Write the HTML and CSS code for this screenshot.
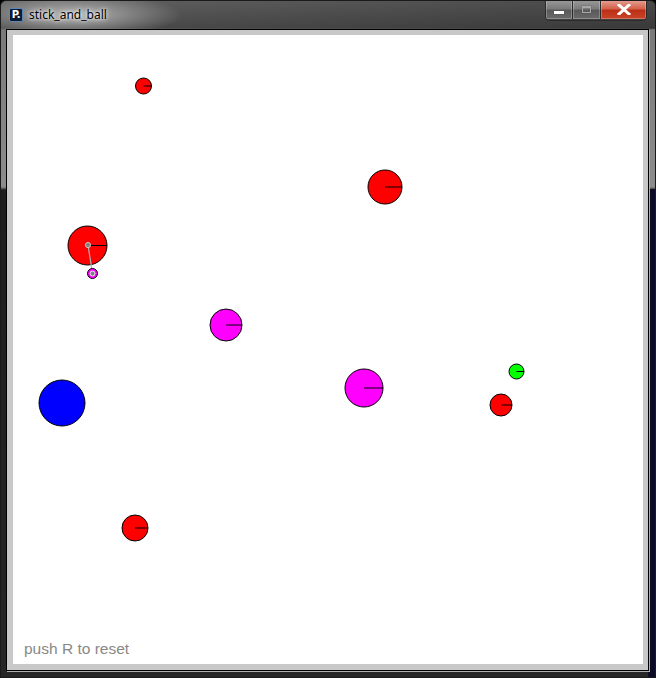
FILE: index.html
```html
<!DOCTYPE html>
<html>
<head>
<meta charset="utf-8">
<link rel="stylesheet" href="styles.css">
</head>
<body>
<div class="window">
  <div class="titlebar">
    <div class="app-icon"><span>P.</span></div>
    <div class="title">stick_and_ball</div>
    <div class="buttons">
      <div class="btn btn-min"><span class="min-glyph"></span></div>
      <div class="btn btn-max"><span class="max-glyph"></span></div>
      <div class="btn btn-close">
        <svg width="14" height="11" viewBox="0 0 14 11"><path d="M2 1 L12 10 M12 1 L2 10" stroke="#fff" stroke-width="3" stroke-linecap="square"/></svg>
      </div>
    </div>
  </div>
  <div class="client">
    <div class="canvas">
      <svg class="scene" width="630" height="629" viewBox="13 35 630 629">
        <g stroke="#000" stroke-width="1">
          <circle cx="143.5" cy="86" r="8" fill="#ff0000"/>
          <line x1="143.5" y1="86" x2="151.5" y2="86"/>
          <circle cx="385" cy="187" r="17" fill="#ff0000"/>
          <line x1="385" y1="187" x2="402" y2="187"/>
          <circle cx="87.5" cy="245.5" r="19.5" fill="#ff0000"/>
          <line x1="87.5" y1="245.5" x2="107" y2="245.5"/>
          <circle cx="226" cy="325" r="16" fill="#ff00ff"/>
          <line x1="226" y1="325" x2="242" y2="325"/>
          <circle cx="62" cy="403" r="23" fill="#0000ff"/>
          <circle cx="364" cy="388" r="19" fill="#ff00ff"/>
          <line x1="364" y1="388" x2="383" y2="388"/>
          <circle cx="516.5" cy="371.5" r="7.5" fill="#00ff00"/>
          <line x1="516.5" y1="371.5" x2="524" y2="371.5"/>
          <circle cx="501" cy="405" r="11" fill="#ff0000"/>
          <line x1="501" y1="405" x2="512" y2="405"/>
          <circle cx="135" cy="528" r="13" fill="#ff0000"/>
          <line x1="135" y1="528" x2="148" y2="528"/>
        </g>
        <line x1="88" y1="245" x2="92.5" y2="273.5" stroke="#b4b4b4" stroke-width="1.2"/>
        <circle cx="92.5" cy="273.5" r="5" fill="#ff00ff" stroke="#000" stroke-width="1"/>
        <circle cx="92.5" cy="273.5" r="2.5" fill="#808080" stroke="#fff" stroke-width="0.8"/>
        <circle cx="88" cy="245" r="2.6" fill="#808080" stroke="#dcdcdc" stroke-width="0.8"/>
      </svg>
      <div class="hint">push R to reset</div>
    </div>
  </div>
</div>
</body>
</html>
```

FILE: styles.css
```css
html, body {
  margin: 0;
  padding: 0;
  background: #000;
}

.window {
  width: 656px;
  height: 678px;
  box-sizing: border-box;
  border: 1px solid #1a1a1a;
  border-radius: 6px 6px 0 0;
  display: flex;
  flex-direction: column;
  background:
    linear-gradient(to bottom, transparent 0, transparent 188px, #0b0b26 188px, #0b0b26 100%) right top / 7px 100% no-repeat,
    linear-gradient(to bottom, #626262 0, #4c4c4c 27px, #7a7a7a 29px, #8c8c8c 186px, #1e1e1e 189px, #262626 100%);
  overflow: hidden;
}

.titlebar {
  height: 28px;
  flex: none;
  display: flex;
  align-items: flex-start;
  padding: 0 8px 0 8px;
  background:
    radial-gradient(ellipse 110px 22px at 72px 14px, rgba(205,205,205,0.8), rgba(205,205,205,0) 100%),
    linear-gradient(to right, rgba(0,0,0,0) 0, rgba(0,0,0,0.25) 100%);
}

.app-icon {
  width: 14px;
  height: 14px;
  margin-top: 7px;
  box-sizing: border-box;
  border: 1px solid #5a86b8;
  border-radius: 2px;
  background: #0c1b33;
  display: flex;
  align-items: center;
  justify-content: center;
  flex: none;
}

.app-icon span {
  color: #fff;
  font-family: "DejaVu Sans", sans-serif;
  font-size: 10px;
  font-weight: bold;
  line-height: 10px;
  letter-spacing: -0.5px;
}

.title {
  margin-left: 6px;
  margin-top: 6px;
  font-family: "Noto Sans", "DejaVu Sans", sans-serif;
  font-size: 12px;
  line-height: 16px;
  color: #000;
  text-shadow: 0 0 6px #fff, 0 0 3px #fff;
}

.buttons {
  margin-left: auto;
  margin-top: -1px;
  display: flex;
  height: 20px;
  border: 1px solid #2b2b2b;
  border-top: none;
  border-radius: 0 0 5px 5px;
  overflow: hidden;
}

.btn {
  height: 19px;
  box-sizing: border-box;
  display: flex;
  align-items: center;
  justify-content: center;
  box-shadow: inset 0 0 0 1px rgba(255,255,255,0.25);
}

.btn-min {
  width: 27px;
  background: linear-gradient(to bottom, #9a9a9a 0, #7c7c7c 45%, #5a5a5a 55%, #6a6a6a 100%);
  border-right: 1px solid #2b2b2b;
}

.btn-max {
  width: 28px;
  background: linear-gradient(to bottom, #9a9a9a 0, #7c7c7c 45%, #5a5a5a 55%, #6a6a6a 100%);
  border-right: 1px solid #2b2b2b;
}

.btn-close {
  width: 45px;
  background: linear-gradient(to bottom, #e7a294 0, #d3634d 45%, #bd2f17 55%, #c8452a 100%);
}

.min-glyph {
  width: 10px;
  height: 3px;
  margin-top: 5px;
  background: #fff;
  box-shadow: 0 0 1px #333;
}

.max-glyph {
  width: 9px;
  height: 7px;
  box-sizing: border-box;
  border: 1px solid #a8a8a8;
  border-top-width: 2px;
  box-shadow: 0 0 1px #444;
}

.client {
  flex: 1;
  margin: 0 6px 6px 5px;
  border: 1px solid #000;
  background: #c8c8c8;
  padding: 5px 5px 6px 6px;
  display: flex;
  box-shadow: 1px 1px 0 #b0b0b0;
}

.canvas {
  position: relative;
  flex: 1;
  background: #fff;
  display: flex;
  flex-direction: column;
  justify-content: flex-end;
  padding: 0 0 6px 11px;
}

.scene {
  position: absolute;
  left: 0;
  top: 0;
}

.hint {
  position: relative;
  font-family: "Liberation Sans", Arial, sans-serif;
  font-size: 15.5px;
  line-height: 18px;
  color: #888888;
}
```
